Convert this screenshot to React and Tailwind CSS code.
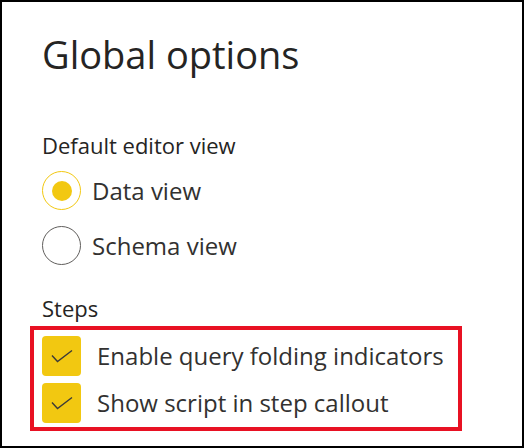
import React from 'react';

const Radio = ({ checked, label }) => (
  <div className="flex items-center h-[55px]">
    <div
      className={`flex items-center justify-center w-[39px] h-[39px] rounded-full border ${
        checked ? 'border-[#f2c811]' : 'border-[#605e5c]'
      }`}
    >
      {checked && <div className="w-[20px] h-[20px] rounded-full bg-[#f2c811]" />}
    </div>
    <span className="ml-[11px] text-[24px] leading-none text-[#323130]">{label}</span>
  </div>
);

const Check = ({ label }) => (
  <div className="flex items-center h-[47px]">
    <div className="flex items-center justify-center w-[39px] h-[40px] rounded-[4px] bg-[#f2c811]">
      <svg width="22" height="14" viewBox="0 0 22 14" fill="none">
        <path d="M1 6.5 L6.5 12.5 L21 1.5" stroke="#3b3a39" strokeWidth="1.4" />
      </svg>
    </div>
    <span className="ml-[16px] text-[24px] leading-none text-[#323130]">{label}</span>
  </div>
);

export default function App() {
  return (
    <div
      className="w-[524px] h-[448px] border-2 border-black bg-white overflow-hidden"
      style={{ fontFamily: '"Open Sans", "Noto Sans", sans-serif' }}
    >
      <div className="pl-[40px] pt-[26px]">
        <h1 className="text-[38px] leading-[52px] text-[#252423]">Global options</h1>

        <h2 className="mt-[51px] text-[22px] leading-[29px] text-[#252423]">Default editor view</h2>
        <div className="mt-[3px]">
          <Radio checked label="Data view" />
          <Radio label="Schema view" />
        </div>

        <h2 className="mt-[21px] text-[22px] leading-[29px] text-[#252423]">Steps</h2>
      </div>
      <div className="ml-[28px] mt-[3px] w-[432px] h-[105px] border-[4px] border-[#e81123] pl-[8px] pt-[2px]">
        <Check label="Enable query folding indicators" />
        <Check label="Show script in step callout" />
      </div>
    </div>
  );
}
